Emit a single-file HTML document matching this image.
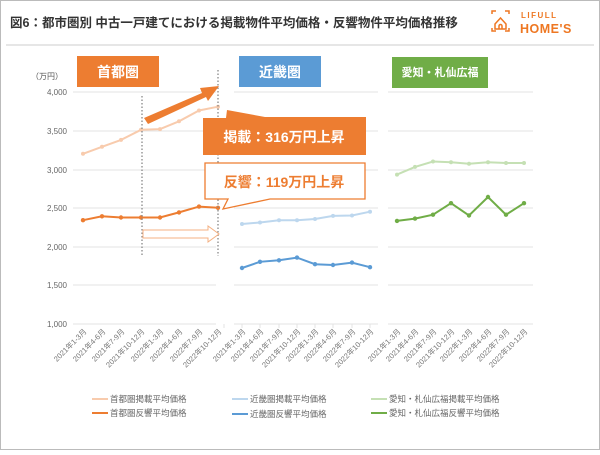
<!DOCTYPE html>
<html><head><meta charset="utf-8"><style>
html,body{margin:0;padding:0;background:#fff}
body{width:600px;height:450px;overflow:hidden;font-family:"Liberation Sans","Noto Sans CJK JP",sans-serif}
</style></head><body>
<svg width="600" height="450" viewBox="0 0 600 450" xmlns="http://www.w3.org/2000/svg" font-family="Liberation Sans, Noto Sans CJK JP, sans-serif">
<rect x="0.5" y="0.5" width="599" height="449" fill="#fff" stroke="#bbb"/>
<text x="10" y="27" font-size="12.5" font-weight="bold" fill="#333">図6：都市圏別 中古一戸建てにおける掲載物件平均価格・反響物件平均価格推移</text>
<line x1="6" y1="45" x2="594" y2="45" stroke="#ccc"/>
<g stroke="#ee7722" stroke-width="1.5" fill="none">
<path d="M492 14v-3h4M505 11h4v3M492 28v3h4M505 31h4v-3"/>
<path d="M495 24l5.5-6 5.5 6v5h-11z"/><path d="M499 29v-3a1.5 1.5 0 0 1 3 0v3"/>
</g>
<text x="521" y="18" font-size="8" font-weight="bold" fill="#ee7722" letter-spacing="1.5">LIFULL</text>
<text x="520" y="33" font-size="12.5" font-weight="bold" fill="#ee7722" letter-spacing="0.5">HOME'S</text>
<rect x="77" y="56" width="82" height="31" fill="#ed7d31"/>
<text x="118" y="77" font-size="14" font-weight="bold" fill="#fff" text-anchor="middle">首都圏</text>
<rect x="239" y="56" width="82" height="31" fill="#5b9bd5"/>
<text x="280" y="77" font-size="14" font-weight="bold" fill="#fff" text-anchor="middle">近畿圏</text>
<rect x="392" y="57" width="96" height="31" fill="#70ad47"/>
<text x="440" y="76" font-size="11" font-weight="bold" fill="#fff" text-anchor="middle">愛知・札仙広福</text>
<text x="31" y="79" font-size="8" fill="#555">（万円）</text>
<g font-size="8" fill="#666" text-anchor="end">
<text x="67" y="95">4,000</text><text x="67" y="134">3,500</text><text x="67" y="173">3,000</text>
<text x="67" y="211">2,500</text><text x="67" y="250">2,000</text><text x="67" y="288">1,500</text><text x="67" y="327">1,000</text>
</g>
<g stroke="#e3e3e3" stroke-width="1">
<path d="M73 92H216M73 131H216M73 170H216M73 208H216M73 247H216M73 285H216M73 324H216"/>
<path d="M234 92H378M234 131H378M234 170H378M234 208H378M234 247H378M234 285H378M234 324H378"/>
<path d="M388 92H533M388 131H533M388 170H533M388 208H533M388 247H533M388 285H533M388 324H533"/>
<path d="M224 324v4M242 324v4M260 324v4M279 324v4M297 324v4M315 324v4M333 324v4M352 324v4M370 324v4"/>
</g>
<g fill="none" stroke-width="2">
<polyline stroke="#f8cbad" points="83,153.8 102,146.8 121,139.9 141,129.8 160,129.1 179,121.3 199,110.5 218,106.7"/>
<polyline stroke="#ed7d31" points="83,220.2 102,216.3 121,217.5 141,217.5 160,217.5 179,212.4 199,206.6 218,207.8"/>
<polyline stroke="#bdd7ee" points="242,224 260,222.5 279,220.2 297,220.2 315,219 333,215.9 352,215.5 370,211.7"/>
<polyline stroke="#5b9bd5" points="242,268 260,261.8 279,260.3 297,257.6 315,264.2 333,265 352,262.6 370,267.2"/>
<polyline stroke="#c5e0b4" points="397,174.6 415,166.9 433,161.5 451,162.3 469,163.8 488,162.3 506,163 524,163"/>
<polyline stroke="#70ad47" points="397,220.9 415,218.6 433,214.7 451,203.2 469,215.5 488,197 506,214.7 524,203.2"/>
</g>
<g fill="#f8cbad"><circle cx="83" cy="153.8" r="2"/><circle cx="102" cy="146.8" r="2"/><circle cx="121" cy="139.9" r="2"/><circle cx="141" cy="129.8" r="2"/><circle cx="160" cy="129.1" r="2"/><circle cx="179" cy="121.3" r="2"/><circle cx="199" cy="110.5" r="2"/><circle cx="218" cy="106.7" r="2"/></g>
<g fill="#ed7d31"><circle cx="83" cy="220.2" r="2.2"/><circle cx="102" cy="216.3" r="2.2"/><circle cx="121" cy="217.5" r="2.2"/><circle cx="141" cy="217.5" r="2.2"/><circle cx="160" cy="217.5" r="2.2"/><circle cx="179" cy="212.4" r="2.2"/><circle cx="199" cy="206.6" r="2.2"/><circle cx="218" cy="207.8" r="2.2"/></g>
<g fill="#bdd7ee"><circle cx="242" cy="224" r="2"/><circle cx="260" cy="222.5" r="2"/><circle cx="279" cy="220.2" r="2"/><circle cx="297" cy="220.2" r="2"/><circle cx="315" cy="219" r="2"/><circle cx="333" cy="215.9" r="2"/><circle cx="352" cy="215.5" r="2"/><circle cx="370" cy="211.7" r="2"/></g>
<g fill="#5b9bd5"><circle cx="242" cy="268" r="2.2"/><circle cx="260" cy="261.8" r="2.2"/><circle cx="279" cy="260.3" r="2.2"/><circle cx="297" cy="257.6" r="2.2"/><circle cx="315" cy="264.2" r="2.2"/><circle cx="333" cy="265" r="2.2"/><circle cx="352" cy="262.6" r="2.2"/><circle cx="370" cy="267.2" r="2.2"/></g>
<g fill="#c5e0b4"><circle cx="397" cy="174.6" r="2"/><circle cx="415" cy="166.9" r="2"/><circle cx="433" cy="161.5" r="2"/><circle cx="451" cy="162.3" r="2"/><circle cx="469" cy="163.8" r="2"/><circle cx="488" cy="162.3" r="2"/><circle cx="506" cy="163" r="2"/><circle cx="524" cy="163" r="2"/></g>
<g fill="#70ad47"><circle cx="397" cy="220.9" r="2.2"/><circle cx="415" cy="218.6" r="2.2"/><circle cx="433" cy="214.7" r="2.2"/><circle cx="451" cy="203.2" r="2.2"/><circle cx="469" cy="215.5" r="2.2"/><circle cx="488" cy="197" r="2.2"/><circle cx="506" cy="214.7" r="2.2"/><circle cx="524" cy="203.2" r="2.2"/></g>
<g stroke="#888" stroke-width="1.3" stroke-dasharray="1.5,2"><path d="M142 96V256M218 70V256"/></g>
<path d="M144 118L202 93L200 88L219 86L208 101L206 97L148 124Z" fill="#ed7d31"/>
<path d="M143 230H208V226L219 234L208 242V238H143Z" fill="#fff" stroke="#f4b183" stroke-width="1"/>
<path d="M203 118H226L227 110L265 117H366V155H203Z" fill="#ed7d31"/>
<text x="284" y="142" font-size="14" font-weight="bold" fill="#fff" text-anchor="middle">掲載：316万円上昇</text>
<path d="M205 163H365V199H270L223 209L228 199H205Z" fill="#fff" stroke="#ed7d31" stroke-width="1.3"/>
<text x="284" y="187" font-size="14" font-weight="bold" fill="#ed7d31" text-anchor="middle">反響：119万円上昇</text>
<g font-size="7.5" fill="#777" text-anchor="end">
<text transform="translate(87,332) rotate(-45)">2021年1-3月</text><text transform="translate(106,332) rotate(-45)">2021年4-6月</text><text transform="translate(125,332) rotate(-45)">2021年7-9月</text><text transform="translate(145,332) rotate(-45)">2021年10-12月</text><text transform="translate(164,332) rotate(-45)">2022年1-3月</text><text transform="translate(183,332) rotate(-45)">2022年4-6月</text><text transform="translate(203,332) rotate(-45)">2022年7-9月</text><text transform="translate(222,332) rotate(-45)">2022年10-12月</text>
<text transform="translate(246,332) rotate(-45)">2021年1-3月</text><text transform="translate(264,332) rotate(-45)">2021年4-6月</text><text transform="translate(283,332) rotate(-45)">2021年7-9月</text><text transform="translate(301,332) rotate(-45)">2021年10-12月</text><text transform="translate(319,332) rotate(-45)">2022年1-3月</text><text transform="translate(337,332) rotate(-45)">2022年4-6月</text><text transform="translate(356,332) rotate(-45)">2022年7-9月</text><text transform="translate(374,332) rotate(-45)">2022年10-12月</text>
<text transform="translate(401,332) rotate(-45)">2021年1-3月</text><text transform="translate(419,332) rotate(-45)">2021年4-6月</text><text transform="translate(437,332) rotate(-45)">2021年7-9月</text><text transform="translate(455,332) rotate(-45)">2021年10-12月</text><text transform="translate(473,332) rotate(-45)">2022年1-3月</text><text transform="translate(492,332) rotate(-45)">2022年4-6月</text><text transform="translate(510,332) rotate(-45)">2022年7-9月</text><text transform="translate(528,332) rotate(-45)">2022年10-12月</text>
</g>
<g stroke-width="2">
<path d="M92 399H108" stroke="#f8cbad"/><path d="M92 413H108" stroke="#ed7d31"/>
<path d="M232 399H248" stroke="#bdd7ee"/><path d="M232 414H248" stroke="#5b9bd5"/>
<path d="M371 399H387" stroke="#c5e0b4"/><path d="M371 413H387" stroke="#70ad47"/>
</g>
<g font-size="8.5" fill="#666">
<text x="110" y="402">首都圏掲載平均価格</text><text x="110" y="416">首都圏反響平均価格</text>
<text x="250" y="402">近畿圏掲載平均価格</text><text x="250" y="417">近畿圏反響平均価格</text>
<text x="389" y="402">愛知・札仙広福掲載平均価格</text><text x="389" y="416">愛知・札仙広福反響平均価格</text>
</g>
</svg>
</body></html>
